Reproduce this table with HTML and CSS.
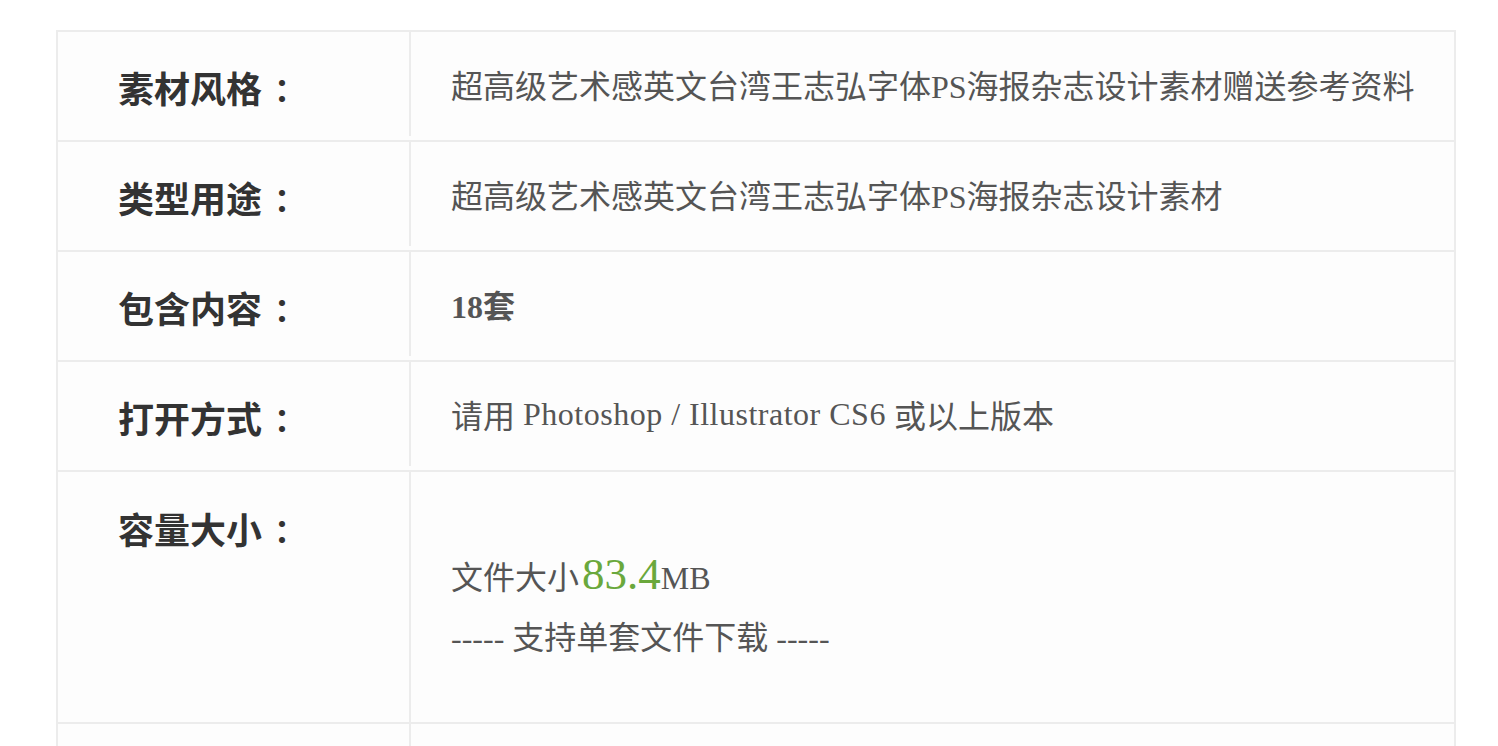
FILE: index.html
```html
<!DOCTYPE html>
<html lang="zh-CN">
<head>
    <meta charset="UTF-8">
    <meta name="viewport" content="width=device-width, initial-scale=1.0">
    <title>素材详情</title>
    <link rel="stylesheet" href="styles.css">
</head>
<body>
    <div class="spec">
        <div class="row">
            <div class="label">素材风格<span class="colon">：</span></div>
            <div class="value">超高级艺术感英文台湾王志弘字体PS海报杂志设计素材赠送参考资料</div>
        </div>
        <div class="row">
            <div class="label">类型用途<span class="colon">：</span></div>
            <div class="value">超高级艺术感英文台湾王志弘字体PS海报杂志设计素材</div>
        </div>
        <div class="row">
            <div class="label">包含内容<span class="colon">：</span></div>
            <div class="value strong">18套</div>
        </div>
        <div class="row">
            <div class="label">打开方式<span class="colon">：</span></div>
            <div class="value">请用 <span class="latin">Photoshop / Illustrator CS6</span> 或以上版本</div>
        </div>
        <div class="row tall">
            <div class="label">容量大小<span class="colon">：</span></div>
            <div class="value">
                <div class="line">文件大小<span class="num">83.4</span>MB</div>
                <div class="line">----- 支持单套文件下载 -----</div>
            </div>
        </div>
        <div class="row last">
            <div class="label"></div>
            <div class="value"></div>
        </div>
    </div>
</body>
</html>
```

FILE: styles.css
```css
body {
    margin: 0;
    background: #fff;
    font-family: "Liberation Serif", "Noto Sans CJK SC", serif;
}
.spec {
    box-sizing: border-box;
    width: 1400px;
    margin: 30px 0 0 56px;
    border: 2px solid #ececec;
    border-bottom: none;
    background: #fdfdfd;
}
.row {
    display: grid;
    grid-template-columns: 351px 1fr;
    height: 108px;
    border-bottom: 2px solid #ececec;
}
.label {
    padding-left: 60px;
    font-family: "Noto Sans CJK SC", sans-serif;
    font-size: 36px;
    font-weight: bold;
    color: #333;
    display: flex;
    align-items: center;
    padding-top: 2px;
}
.colon {
    padding-left: 12px;
    font-size: 32px;
}
.value {
    border-left: 2px solid #ececec;
    margin-bottom: 4px;
    padding-left: 40px;
    font-size: 32px;
    color: #555;
    display: flex;
    align-items: center;
    white-space: pre;
}
.value.strong {
    font-weight: bold;
}
.latin {
    letter-spacing: 0.5px;
}
.tall {
    height: 250px;
}
.tall .label {
    align-items: flex-start;
    padding-top: 32px;
    line-height: 48px;
}
.tall .value {
    margin-bottom: 0;
    display: block;
    padding-top: 72px;
    white-space: normal;
}
.line {
    line-height: 60px;
}
.num {
    font-size: 45px;
    color: #6aa83c;
    margin-left: 3px;
}
.last .value {
    margin-bottom: 0;
}
```
